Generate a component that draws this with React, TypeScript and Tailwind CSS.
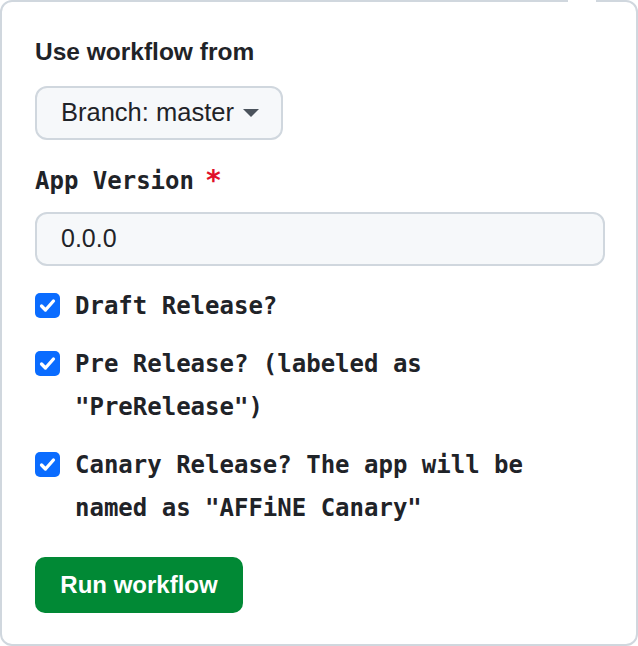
import React from "react"

const mono = { fontFamily: '"DejaVu Sans Mono", "Liberation Mono", monospace' }

function CheckRow({ label }: { label: string }) {
  return (
    <div className="flex items-start gap-[15px]">
      <span className="mt-[8px] flex h-[25px] w-[25px] shrink-0 items-center justify-center rounded-[5px] bg-[#0a6cff]">
        <svg width="19" height="19" viewBox="0 0 16 16" fill="none">
          <path d="M3 8.4 L6.3 11.8 L13 4.2" stroke="white" strokeWidth="2.8" strokeLinecap="round" strokeLinejoin="round" />
        </svg>
      </span>
      <span className="text-[24px] font-bold leading-[43px] text-[#1f2328]" style={mono}>
        {label}
      </span>
    </div>
  )
}

export default function App() {
  return (
    <div className="relative box-border h-[646px] w-[638px] rounded-[12px] border-2 border-[#d0d7de] bg-white px-[33px] pt-[32px] font-['Liberation_Sans',Arial,sans-serif] text-[#1f2328]">
      {/* notch under the dropdown caret */}
      <div className="absolute top-[-2px] left-[566px] h-[3px] w-[28px] bg-white" />

      <div className="text-[24.5px] font-bold leading-[36px]">Use workflow from</div>

      <button className="mt-[16px] flex h-[54px] w-[248px] items-center rounded-[12px] border-2 border-[#d0d7de] bg-[#f6f8fa] pl-[24px] text-[25.5px] leading-none">
        <span>Branch: master</span>
        <svg className="ml-[9px]" width="16" height="8" viewBox="0 0 16 8">
          <path d="M0 0 H16 L8 8 Z" fill="#4b535c" />
        </svg>
      </button>

      <div className="mt-[23px] flex items-center text-[24px] font-bold leading-[36px]" style={mono}>
        <span>App Version</span>
        <span className="ml-[11px] text-[28px] text-[#e0102a]">*</span>
      </div>

      <div className="mt-[13px] flex h-[54px] w-[570px] items-center rounded-[12px] border-2 border-[#d0d7de] bg-[#f6f8fa] pl-[24px] text-[25px]">
        0.0.0
      </div>

      <div className="mt-[19px] flex flex-col gap-[15px]">
        <CheckRow label="Draft Release?" />
        <CheckRow label={'Pre Release? (labeled as\n"PreRelease")'} />
        <CheckRow label={'Canary Release? The app will be\nnamed as "AFFiNE Canary"'} />
      </div>

      <button className="mt-[27px] flex h-[56px] w-[208px] items-center justify-center rounded-[10px] bg-[#018935] text-[24px] font-bold text-white">
        Run workflow
      </button>
    </div>
  )
}
